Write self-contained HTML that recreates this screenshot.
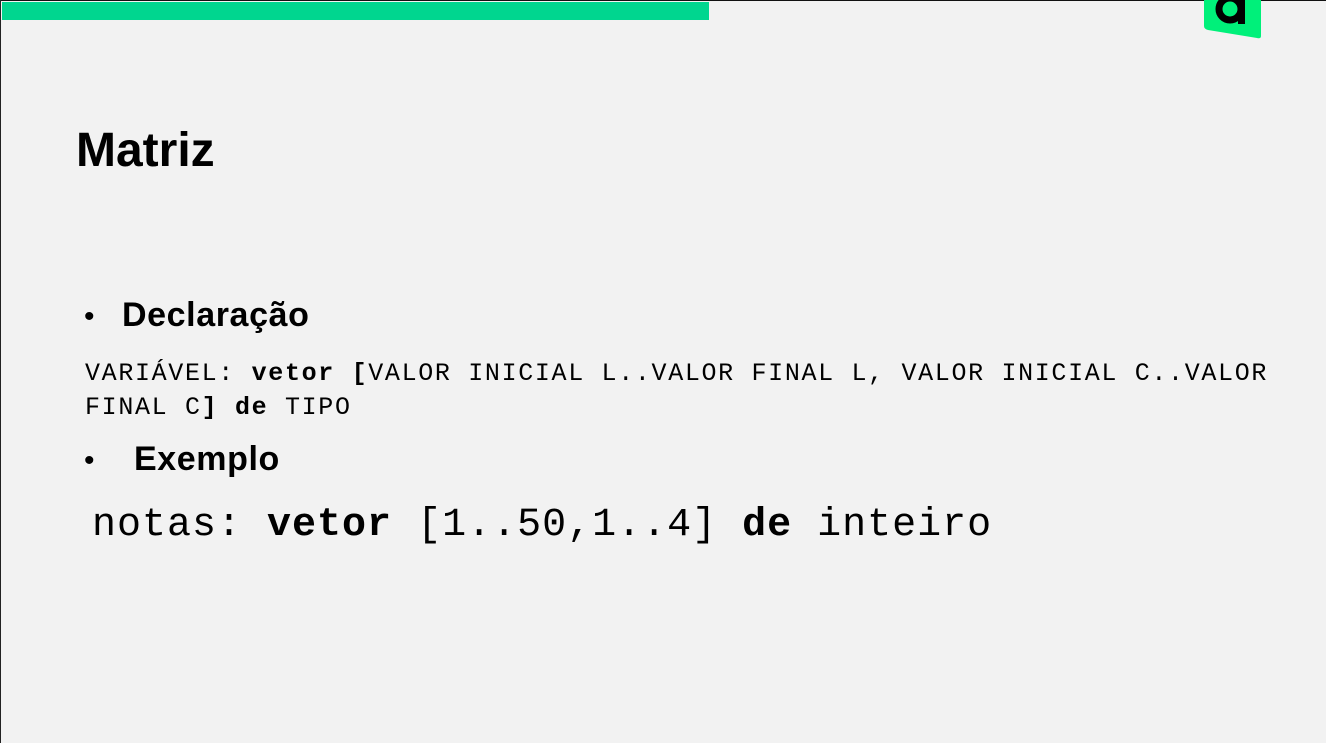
<!DOCTYPE html>
<html><head><meta charset="utf-8"><style>
body{margin:0;width:1326px;height:743px;background:#f2f2f2;position:relative;overflow:hidden;font-family:"Liberation Sans",sans-serif;}
.top{position:absolute;left:0;top:0;width:1326px;height:1px;background:#111;}
.left{position:absolute;left:0;top:0;width:1px;height:743px;background:#222;}
.bar{position:absolute;left:2px;top:2px;width:707px;height:18px;background:#00d68f;}
.t{position:absolute;color:#000;white-space:pre;}
.mono{font-family:"Liberation Mono",monospace;}
</style></head><body>
<div class="top"></div><div class="left"></div><div class="bar"></div>
<svg style="position:absolute;left:1200px;top:0" width="64" height="42"><path d="M4 0H61V36Q61 39 57 38L8 30Q4 29 4 26Z" fill="#00f07a"/><circle cx="30" cy="9" r="11" fill="none" stroke="#000" stroke-width="7"/><rect x="38" y="0" width="7" height="24" fill="#000"/></svg>
<div class="t" style="left:76px;top:123px;font-size:48px;font-weight:bold;letter-spacing:0px">Matriz</div>
<div class="t" style="left:84px;top:300px;font-size:30px;">•</div>
<div class="t" style="left:122px;top:296px;font-size:34px;font-weight:bold;letter-spacing:0.6px">Declaração</div>
<div class="t mono" style="left:85px;top:357px;font-size:25px;letter-spacing:1.66px;line-height:34px">VARIÁVEL: <b>vetor [</b>VALOR INICIAL L..VALOR FINAL L, VALOR INICIAL C..VALOR
FINAL C<b>] de</b> TIPO</div>
<div class="t" style="left:84px;top:444px;font-size:30px;">•</div>
<div class="t" style="left:134px;top:440px;font-size:34px;font-weight:bold;letter-spacing:0.6px">Exemplo</div>
<div class="t mono" style="left:92px;top:503px;font-size:40px;letter-spacing:1px">notas: <b>vetor</b> [1..50,1..4] <b>de</b> inteiro</div>
</body></html>
